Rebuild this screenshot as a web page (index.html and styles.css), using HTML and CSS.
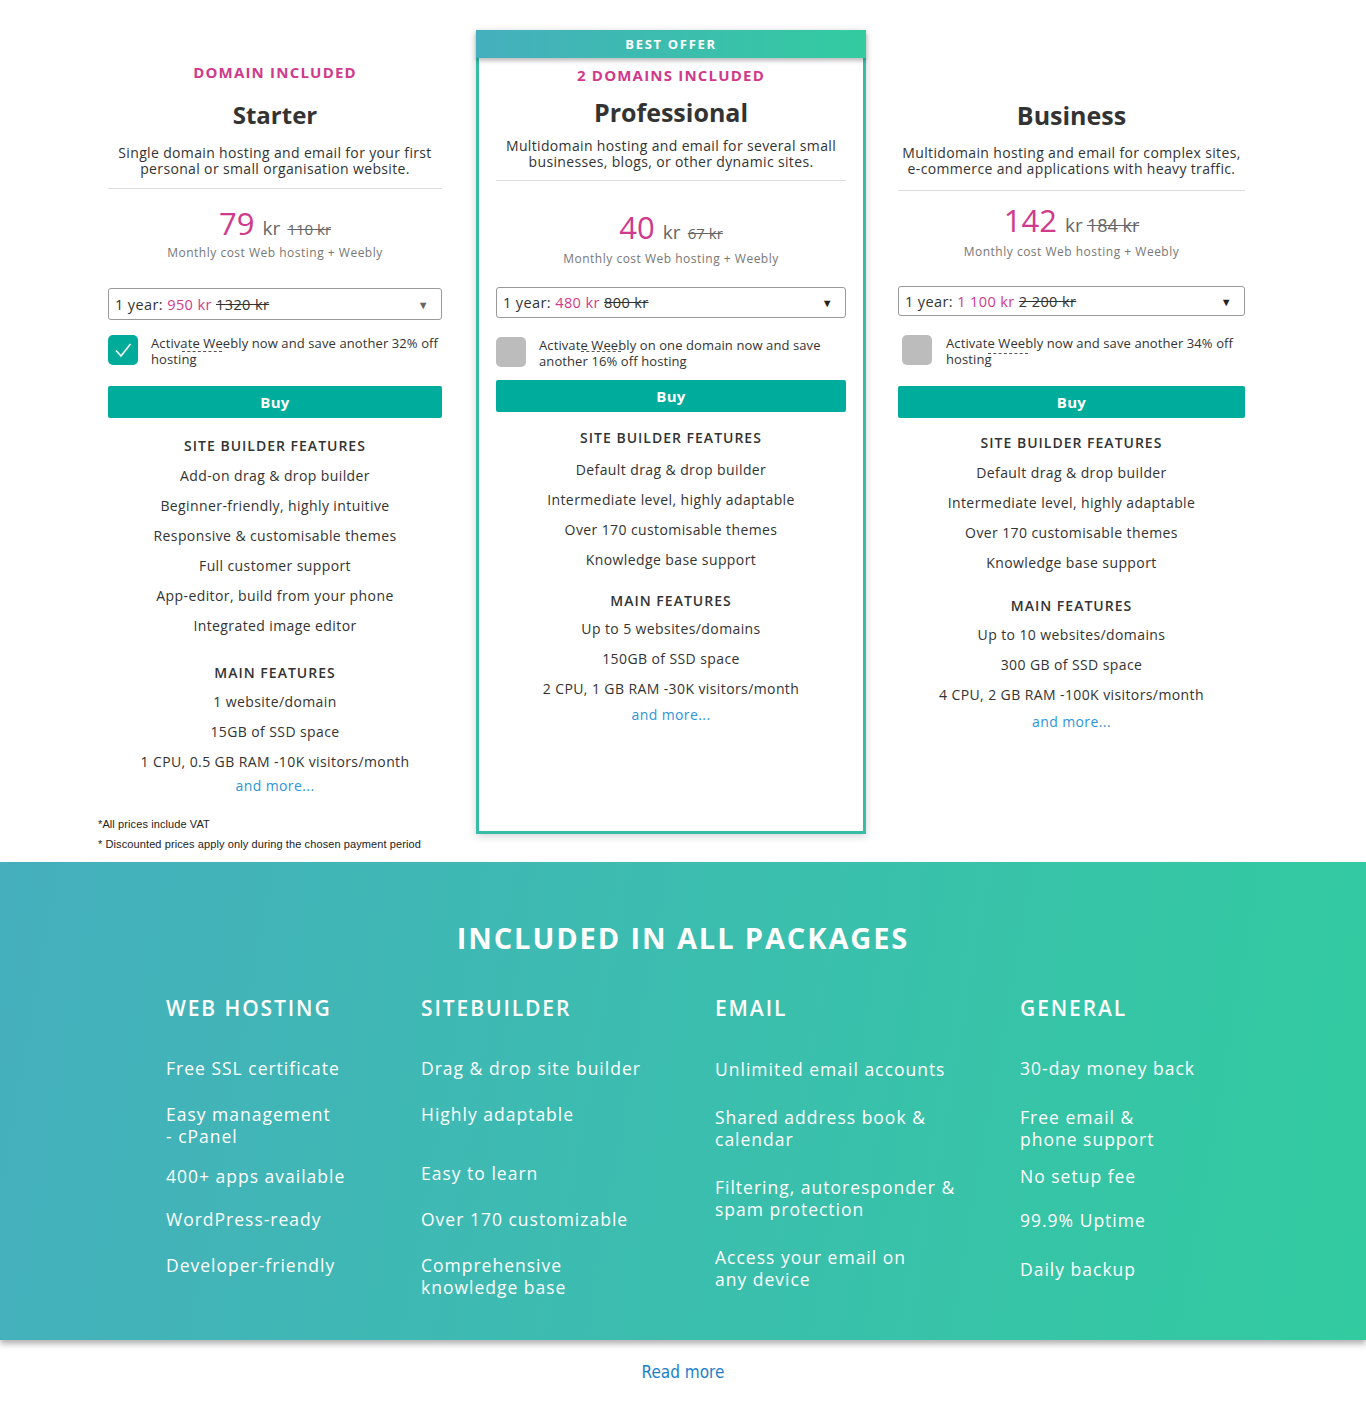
FILE: index.html
```html
<!DOCTYPE html>
<html lang="en">
<head>
<meta charset="utf-8">
<title>Web hosting packages</title>
<link rel="stylesheet" href="styles.css">
</head>
<body>
<section class="pricing">
  <div class="plan plan-starter">
    <div class="tag">DOMAIN INCLUDED</div>
    <h2 class="title">Starter</h2>
    <p class="desc">Single domain hosting and email for your first personal or small organisation website.</p>
    <hr class="divider">
    <div class="price"><span class="amount">79</span> <span class="cur">kr</span> <s class="old">110 kr</s></div>
    <div class="monthly">Monthly cost Web hosting + Weebly</div>
    <div class="select"><span>1 year: <span class="pink">950 kr</span> <s>1320 kr</s></span><span class="arrow arrow-gray">&#9660;</span></div>
    <div class="activate">
      <span class="check on"><svg viewBox="0 0 30 30" width="30" height="30"><path d="M8 15.5 L13 21 L22.5 9" fill="none" stroke="#fff" stroke-width="1.6"/></svg></span>
      <span class="act-text">Activate Weebly now and save another 32% off hosting<span class="tip"></span></span>
    </div>
    <button class="buy">Buy</button>
    <h3 class="feat-head">SITE BUILDER FEATURES</h3>
    <ul class="feats">
      <li>Add-on drag &amp; drop builder</li>
      <li>Beginner-friendly, highly intuitive</li>
      <li>Responsive &amp; customisable themes</li>
      <li>Full customer support</li>
      <li>App-editor, build from your phone</li>
      <li>Integrated image editor</li>
    </ul>
    <h3 class="feat-head main-head">MAIN FEATURES</h3>
    <ul class="feats main-feats">
      <li>1 website/domain</li>
      <li>15GB of SSD space</li>
      <li>1 CPU, 0.5 GB RAM -10K visitors/month</li>
    </ul>
    <a class="more" href="#">and more...</a>
    <div class="notes">
      <p>*All prices include VAT</p>
      <p>* Discounted prices apply only during the chosen payment period</p>
    </div>
  </div>

  <div class="plan-card">
    <div class="ribbon">BEST OFFER</div>
    <div class="plan plan-pro">
      <div class="tag">2 DOMAINS INCLUDED</div>
      <h2 class="title">Professional</h2>
      <p class="desc">Multidomain hosting and email for several small businesses, blogs, or other dynamic sites.</p>
      <hr class="divider">
      <div class="price"><span class="amount">40</span> <span class="cur">kr</span> <s class="old">67 kr</s></div>
      <div class="monthly">Monthly cost Web hosting + Weebly</div>
      <div class="select"><span>1 year: <span class="pink">480 kr</span> <s>800 kr</s></span><span class="arrow">&#9660;</span></div>
      <div class="activate">
        <span class="check"></span>
        <span class="act-text">Activate Weebly on one domain now and save another 16% off hosting<span class="tip"></span></span>
      </div>
      <button class="buy">Buy</button>
      <h3 class="feat-head">SITE BUILDER FEATURES</h3>
      <ul class="feats">
        <li>Default drag &amp; drop builder</li>
        <li>Intermediate level, highly adaptable</li>
        <li>Over 170 customisable themes</li>
        <li>Knowledge base support</li>
      </ul>
      <h3 class="feat-head main-head">MAIN FEATURES</h3>
      <ul class="feats main-feats">
        <li>Up to 5 websites/domains</li>
        <li>150GB of SSD space</li>
        <li>2 CPU, 1 GB RAM -30K visitors/month</li>
      </ul>
      <a class="more" href="#">and more...</a>
    </div>
  </div>

  <div class="plan plan-biz">
    <div class="tag tag-empty"></div>
    <h2 class="title">Business</h2>
    <p class="desc">Multidomain hosting and email for complex sites, e&#8209;commerce and applications with heavy traffic.</p>
    <hr class="divider">
    <div class="price"><span class="amount">142</span> <span class="cur">kr</span> <s class="old">184 kr</s></div>
    <div class="monthly">Monthly cost Web hosting + Weebly</div>
    <div class="select"><span>1 year: <span class="pink">1 100 kr</span> <s>2 200 kr</s></span><span class="arrow">&#9660;</span></div>
    <div class="activate">
      <span class="check"></span>
      <span class="act-text">Activate Weebly now and save another 34% off hosting<span class="tip"></span></span>
    </div>
    <button class="buy">Buy</button>
    <h3 class="feat-head">SITE BUILDER FEATURES</h3>
    <ul class="feats">
      <li>Default drag &amp; drop builder</li>
      <li>Intermediate level, highly adaptable</li>
      <li>Over 170 customisable themes</li>
      <li>Knowledge base support</li>
    </ul>
    <h3 class="feat-head main-head">MAIN FEATURES</h3>
    <ul class="feats main-feats">
      <li>Up to 10 websites/domains</li>
      <li>300 GB of SSD space</li>
      <li>4 CPU, 2 GB RAM -100K visitors/month</li>
    </ul>
    <a class="more" href="#">and more...</a>
  </div>
</section>

<section class="included">
  <h2 class="inc-title">INCLUDED IN ALL PACKAGES</h2>
  <div class="inc-grid">
    <div class="inc-col col-web">
      <h3>WEB HOSTING</h3>
      <ul>
        <li>Free SSL certificate</li>
        <li>Easy management<br>- cPanel</li>
        <li>400+ apps available</li>
        <li>WordPress-ready</li>
        <li>Developer-friendly</li>
      </ul>
    </div>
    <div class="inc-col col-site">
      <h3>SITEBUILDER</h3>
      <ul>
        <li>Drag &amp; drop site builder</li>
        <li>Highly adaptable</li>
        <li>Easy to learn</li>
        <li>Over 170 customizable</li>
        <li>Comprehensive<br>knowledge base</li>
      </ul>
    </div>
    <div class="inc-col col-email">
      <h3>EMAIL</h3>
      <ul>
        <li>Unlimited email accounts</li>
        <li>Shared address book &amp;<br>calendar</li>
        <li>Filtering, autoresponder &amp;<br>spam protection</li>
        <li>Access your email on<br>any device</li>
      </ul>
    </div>
    <div class="inc-col col-gen">
      <h3>GENERAL</h3>
      <ul>
        <li>30-day money back</li>
        <li>Free email &amp;<br>phone support</li>
        <li>No setup fee</li>
        <li>99.9% Uptime</li>
        <li>Daily backup</li>
      </ul>
    </div>
  </div>
</section>

<div class="read-more"><a href="#">Read more</a></div>
</body>
</html>
```

FILE: styles.css
```css
* { box-sizing: border-box; }
html, body { margin: 0; padding: 0; background: #fff; }
body {
  font-family: "Open Sans", "Noto Sans", Arial, sans-serif;
  color: #333;
  width: 1366px;
}
h2, h3, p, ul { margin: 0; padding: 0; }
ul { list-style: none; }

.pricing {
  display: flex;
  align-items: flex-start;
  padding: 0 0 8px 108px;
}

.plan { text-align: center; }
.plan-starter { width: 334px; margin-top: 62px; }
.plan-card { width: 390px; margin: 30px 0 0 34px; box-shadow: 0 2px 8px rgba(0,0,0,0.18); }
.plan-biz { width: 347px; margin-left: 32px; margin-top: 62px; }

.tag {
  color: #cf3a8c;
  font-weight: 700;
  font-size: 15px;
  line-height: 20px;
  letter-spacing: 1.2px;
}
.tag-empty { height: 20px; }

.title {
  font-size: 24px;
  line-height: 30px;
  font-weight: 700;
  color: #333;
  margin-top: 18px;
}
.desc {
  font-size: 14px;
  line-height: 16px;
  letter-spacing: 0.35px;
  margin-top: 15px;
  color: #333;
}
.divider {
  border: 0;
  border-top: 1px solid #dcdcdc;
  margin: 11px 0 0;
  height: 0;
}
.price {
  margin-top: 17px;
  height: 36px;
  line-height: 36px;
  color: #666;
  padding-top: 2px;
}
.price span, .price s { line-height: 1; }
.amount { color: #cf3a8c; font-size: 31px; margin-right: 4px; }
.cur { font-size: 19px; color: #666; margin-right: 3px; }
.old { font-size: 15px; color: #666; }
.plan-biz .cur { margin-right: 0; }
.plan-biz .old { font-size: 18px; }
.monthly {
  font-size: 12px;
  line-height: 16px;
  letter-spacing: 0.5px;
  color: #777;
  margin-top: 3px;
}
.select {
  margin-top: 27px;
  height: 32px;
  border: 1px solid #999;
  border-radius: 3px;
  display: flex;
  align-items: center;
  justify-content: space-between;
  padding: 0 12px 0 6px;
  font-size: 14.5px;
  letter-spacing: 0.4px;
  color: #333;
  text-align: left;
}
.pink { color: #cf3a8c; }
.arrow { font-size: 11px; color: #222; }
.arrow-gray { color: #666; }

.activate {
  margin-top: 15px;
  display: flex;
  align-items: flex-start;
  text-align: left;
  gap: 13px;
}
.check {
  flex: 0 0 30px;
  width: 30px;
  height: 30px;
  border-radius: 5px;
  background: #bcbcbc;
  display: block;
}
.check.on { background: #00ab9a; }
.check svg { display: block; }
.act-text {
  position: relative;
  font-size: 13px;
  line-height: 16px;
  letter-spacing: 0.1px;
  color: #333;
}
.tip {
  position: absolute;
  left: 42px;
  top: 14px;
  width: 40px;
  height: 0;
  border-bottom: 1px dashed #555;
}
.plan-starter .tip { left: 31px; top: 16px; }

.buy {
  display: block;
  width: 100%;
  margin-top: 19px;
  height: 32px;
  border: 0;
  border-radius: 2px;
  background: #00ac9b;
  color: #fff;
  font-family: inherit;
  font-weight: 700;
  font-size: 15px;
  letter-spacing: 0.3px;
  cursor: pointer;
}
.feat-head {
  margin-top: 18px;
  font-size: 14px;
  line-height: 20px;
  font-weight: 600;
  color: #333;
  letter-spacing: 1px;
}
.feats { margin-top: 5px; }
.feats li {
  font-size: 14px;
  line-height: 30px;
  letter-spacing: 0.4px;
  color: #333;
}
.main-head { margin-top: 22px; }
.main-feats { margin-top: 4px; }
.more {
  display: block;
  font-size: 14px;
  line-height: 20px;
  letter-spacing: 0.4px;
  color: #2e95d8;
  text-decoration: none;
  margin-top: -1px;
}
.notes {
  text-align: left;
  margin: 18px 0 0 -10px;
  font-family: "Liberation Sans", Arial, sans-serif;
  font-size: 11px;
  line-height: 20px;
  letter-spacing: 0.1px;
  color: #222;
  white-space: nowrap;
}

/* Professional card */
.ribbon {
  height: 28px;
  line-height: 28px;
  background: linear-gradient(90deg, #45afbd, #33cba0);
  color: #fff;
  font-weight: 700;
  font-size: 13px;
  letter-spacing: 1.7px;
  text-align: center;
  position: relative;
  box-shadow: 0 3px 4px rgba(0,0,0,0.25);
}
.plan-pro {
  border: 3px solid #36bca7;
  border-top: 0;
  padding: 7px 17px 0;
  height: 776px;
}
.plan-pro .title { font-size: 25px; line-height: 32px; margin-top: 11px; }
.plan-pro .desc { margin-top: 10px; }
.plan-pro .divider { margin-top: 10px; }
.plan-pro .price { margin-top: 29px; }
.plan-pro .monthly { margin-top: 5px; }
.plan-pro .select { margin-top: 20px; height: 31px; }
.plan-pro .activate { margin-top: 19px; }
.plan-pro .buy { margin-top: 11px; }
.plan-pro .feat-head { margin-top: 16px; }
.plan-pro .feats { margin-top: 7px; }
.plan-pro .main-head { margin-top: 16px; }
.plan-pro .main-feats { margin-top: 3px; }
.plan-pro .more { margin-top: 1px; }

/* Business */
.plan-biz .title { font-size: 25px; }
.plan-biz .divider { margin-top: 13px; }
.plan-biz .price { margin-top: 12px; }
.plan-biz .monthly { margin-top: 5px; }
.plan-biz .select { margin-top: 26px; height: 30px; }
.plan-biz .activate { margin-top: 19px; gap: 14px; }
.plan-biz .check { margin-left: 4px; }
.plan-biz .tip { top: 18px; }
.plan-biz .feat-head { margin-top: 15px; }
.plan-biz .main-head { margin-top: 18px; }
.plan-biz .more { margin-top: 2px; }

/* Included section */
.included {
  height: 478px;
  background: linear-gradient(100deg, #45afbd 0%, #3cbcb0 45%, #32cba0 100%);
  color: #fff;
  padding-top: 58px;
  box-shadow: 0 4px 6px rgba(0,0,0,0.3);
  position: relative;
}
.inc-title {
  text-align: center;
  font-size: 29px;
  line-height: 36px;
  font-weight: 700;
  letter-spacing: 1.9px;
}
.inc-grid {
  display: grid;
  grid-template-columns: 255px 294px 305px 1fr;
  padding-left: 166px;
  margin-top: 39px;
}
.inc-col h3 {
  font-size: 21px;
  line-height: 26px;
  font-weight: 600;
  letter-spacing: 1.9px;
}
.inc-col ul {
  margin-top: 36px;
  display: flex;
  flex-direction: column;
  gap: 24px;
}
.inc-col li {
  font-size: 17.5px;
  line-height: 22px;
  letter-spacing: 1px;
}
.col-web li:nth-child(3) { margin-top: -6px; }
.col-web li:nth-child(4) { margin-top: -3px; }
.col-site li:nth-child(3) { margin-top: 13px; }
.col-email ul { gap: 26px; }
.col-email li:first-child { margin-top: 1px; }
.col-gen ul { gap: 22px; }
.col-gen li:nth-child(2) { margin-top: 5px; }
.col-gen li:nth-child(3) { margin-top: -7px; }
.col-gen li:nth-child(5) { margin-top: 5px; }

.read-more {
  text-align: center;
  padding-top: 20px;
  height: 63px;
}
.read-more a {
  font-family: "DejaVu Sans Condensed", "Liberation Sans", Arial, sans-serif;
  font-stretch: condensed;
  font-size: 17px;
  line-height: 24px;
  color: #1b7fcc;
  text-decoration: none;
}
```
